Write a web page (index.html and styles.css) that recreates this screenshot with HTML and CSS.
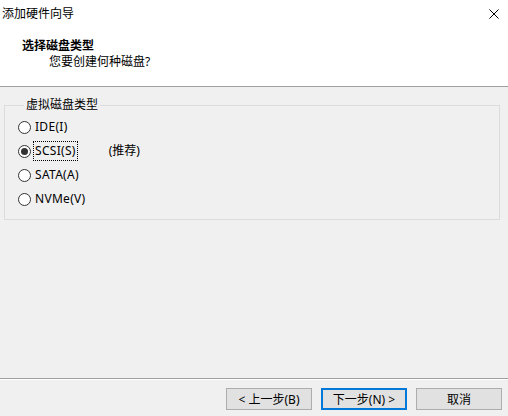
FILE: index.html
```html
<!DOCTYPE html>
<html lang="zh-CN">

<head>
    <meta charset="UTF-8">
    <meta name="viewport" content="width=device-width, initial-scale=1.0">
    <title>添加硬件向导</title>
    <link rel="stylesheet" href="styles.css">
</head>

<body>
    <div class="titlebar">
        <span class="title">添加硬件向导</span>
        <svg class="close" width="10" height="10" viewBox="0 0 10 10">
            <path d="M0.5 0.5 L9.5 9.5 M9.5 0.5 L0.5 9.5" stroke="#000" stroke-width="1" fill="none" />
        </svg>
    </div>
    <div class="header">
        <p class="heading">选择磁盘类型</p>
        <p class="subheading">您要创建何种磁盘?</p>
    </div>
    <div class="main">
        <fieldset class="group">
            <legend>虚拟磁盘类型</legend>
            <div class="option">
                <span class="radio"></span>
                <span class="label">IDE(I)</span>
            </div>
            <div class="option">
                <span class="radio checked"></span>
                <span class="label focused">SCSI(S)</span>
                <span class="note">(推荐)</span>
            </div>
            <div class="option">
                <span class="radio"></span>
                <span class="label">SATA(A)</span>
            </div>
            <div class="option">
                <span class="radio"></span>
                <span class="label">NVMe(V)</span>
            </div>
        </fieldset>
    </div>
    <div class="footer">
        <button class="btn">&lt; 上一步(B)</button>
        <button class="btn default">下一步(N) &gt;</button>
        <button class="btn">取消</button>
    </div>
</body>

</html>
```

FILE: styles.css
```css
* {
    padding: 0;
    margin: 0;
    box-sizing: border-box;
}

body {
    width: 508px;
    height: 416px;
    display: flex;
    flex-direction: column;
    background-color: #f0f0f0;
    color: #000;
    font-family: "Noto Sans", "Noto Sans CJK SC", sans-serif;
    font-size: 12px;
    line-height: 16px;
}

.titlebar {
    height: 28px;
    background-color: #fff;
    display: flex;
    align-items: center;
    justify-content: space-between;
    padding: 0 9px 0 2px;
}

.close {
    display: block;
}

.header {
    height: 59px;
    background-color: #fff;
    border-bottom: 1px solid #a0a0a0;
    padding: 10px 0 0 22px;
}

.heading {
    font-weight: bold;
}

.subheading {
    margin-left: 27px;
}

.main {
    flex: 1;
    padding: 10px 8px 0 4px;
}

.group {
    border: 1px solid #dcdcdc;
    padding: 2px 0 8px 13px;
}

.group legend {
    margin-left: 6px;
    padding: 0 2px;
}

.option {
    height: 24px;
    display: flex;
    align-items: center;
}

.radio {
    width: 13px;
    height: 13px;
    border: 1px solid #333;
    border-radius: 50%;
    background-color: #fff;
    display: flex;
    align-items: center;
    justify-content: center;
    margin-right: 3px;
}

.radio.checked::after {
    content: "";
    width: 7px;
    height: 7px;
    border-radius: 50%;
    background-color: #333;
}

.label {
    padding: 1px 1px;
    letter-spacing: 0.3px;
}

.label.focused {
    outline: 1px dotted #000;
}

.note {
    margin-left: 32px;
}

.footer {
    height: 38px;
    border-top: 1px solid #a0a0a0;
    box-shadow: inset 0 1px 0 #fff;
    display: flex;
    justify-content: flex-end;
    gap: 9px;
    padding: 9px 6px 0 0;
}

.btn {
    width: 86px;
    height: 22px;
    background-color: #e1e1e1;
    border: 1px solid #adadad;
    font-family: inherit;
    font-size: 12px;
    color: #000;
}

.btn.default {
    border: 2px solid #0078d7;
}
```
